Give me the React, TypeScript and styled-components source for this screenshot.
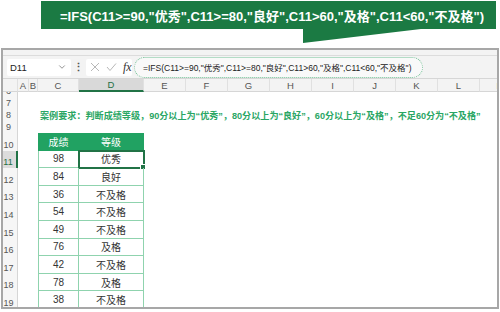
import styled, { createGlobalStyle, css } from 'styled-components';
import { ChevronDown } from 'lucide-react';

// Global

const Global = createGlobalStyle`
  html, body { margin: 0; padding: 0; background: #fff; }
  body { font-family: "Liberation Sans", "Noto Sans CJK SC", sans-serif; }
`;

const FORMULA = '=IFS(C11>=90,"优秀",C11>=80,"良好",C11>60,"及格",C11<60,"不及格")';
const COLS = '15px 11px 9px 41px 65px repeat(9, 42px)';

// Style

const Page = styled.div`
  width: 500px;
  height: 312px;
  display: flex;
  flex-direction: column;
  overflow: hidden;
  background: #fff;
`;

const BannerArea = styled.div`
  height: 48px;
  padding: 1px 4px 0 41px;
  box-sizing: border-box;
  flex: none;
`;

const Callout = styled.div`
  position: relative;
  height: 28px;
  background: #1b7a43;
  color: #fff;
  font-weight: bold;
  font-size: 13px;
  display: flex;
  align-items: center;
  padding-left: 19px;
  white-space: nowrap;

  &::after {
    content: '';
    position: absolute;
    left: 262px;
    top: 28px;
    width: 118px;
    height: 14px;
    background: #1b7a43;
    clip-path: polygon(0 0, 100% 0, 0 100%);
  }
`;

const Window = styled.div`
  margin: 0 1px;
  height: 261px;
  border: 2px solid #a7a7a7;
  box-sizing: border-box;
  display: flex;
  flex-direction: column;
  overflow: hidden;
  background: #fff;
`;

const Strip = styled.div`
  height: 5px;
  flex: none;
  background: #f3f3f3;
  border-bottom: 1px solid #dcdcdc;
`;

const FormulaBar = styled.div`
  height: 22px;
  flex: none;
  display: flex;
  align-items: center;
  padding-left: 4px;
  background: #f3f3f3;
`;

const NameBox = styled.div`
  width: 64px;
  height: 17px;
  box-sizing: border-box;
  background: #fff;
  border-radius: 2px;
  display: flex;
  align-items: center;
  justify-content: space-between;
  padding: 0 4px 0 3px;
  font-size: 9.5px;
  color: #222;
`;

const Dots = styled.div`
  width: 15px;
  text-align: center;
  font-size: 11px;
  font-weight: bold;
  color: #555;
`;

const FxBox = styled.div`
  width: 46px;
  height: 17px;
  box-sizing: border-box;
  background: #fff;
  border-radius: 2px;
  display: flex;
  align-items: center;
  gap: 6px;
  padding-left: 4px;
`;

const Fx = styled.span`
  font-family: "Liberation Serif", serif;
  font-style: italic;
  font-size: 12px;
  color: #333;
`;

const Pill = styled.div`
  margin-left: 2px;
  width: 289px;
  height: 21px;
  box-sizing: border-box;
  border: 1.5px dotted #6fbf93;
  border-radius: 11px;
  background: #f9f9f9;
  display: flex;
  align-items: center;
  padding-left: 8px;
  font-size: 8.5px;
  color: #222;
  white-space: nowrap;
`;

const HeaderRow = styled.div`
  height: 14px;
  flex: none;
  display: grid;
  grid-template-columns: ${COLS};
  background: #f3f3f3;
  border-top: 1px solid #d6d6d6;
  box-sizing: border-box;
  overflow: hidden;
`;

const ColHead = styled.div<{ $active?: boolean }>`
  font-size: 9.5px;
  color: #555;
  display: flex;
  align-items: center;
  justify-content: center;
  border-right: 1px solid #e0e0e0;
  border-bottom: 1px solid #d6d6d6;
  ${(p) =>
    p.$active &&
    css`
      background: #d9d9d9;
      color: #1e6f42;
      border-bottom: 2px solid #217346;
    `}
`;

const Body = styled.div`
  flex: 1;
  overflow: hidden;
`;

const Grid = styled.div`
  margin-top: -7px;
  display: grid;
  grid-template-columns: ${COLS};
  grid-template-rows: repeat(4, 12px) repeat(10, 17.6px);
`;

const RowHead = styled.div<{ $active?: boolean }>`
  grid-column: 1;
  background: #f6f6f6;
  border-right: 1px solid #d6d6d6;
  font-size: 9px;
  color: #555;
  display: flex;
  align-items: flex-end;
  justify-content: center;
  padding: 0 3px 1px 0;
  ${(p) =>
    p.$active &&
    css`
      background: #dcdcdc;
      border-right: 2px solid #217346;
      color: #1e6f42;
    `}
`;

const Note = styled.div<{ $row: number }>`
  grid-column: 4 / -1;
  grid-row: ${(p) => p.$row};
  padding-left: 2px;
  white-space: nowrap;
  font-size: 9.1px;
  font-weight: bold;
  color: #2aa664;
  display: flex;
  align-items: center;
`;

const Cell = styled.div<{ $row: number; $col: number; $head?: boolean; $selected?: boolean }>`
  position: relative;
  grid-row: ${(p) => p.$row};
  grid-column: ${(p) => p.$col};
  display: flex;
  align-items: center;
  justify-content: center;
  font-size: 10px;
  color: #333;
  border-right: 1px solid #8fd3ae;
  border-bottom: 1px solid #8fd3ae;
  ${(p) => p.$col === 4 && css`border-left: 1px solid #8fd3ae;`}
  ${(p) =>
    p.$head &&
    css`
      background: #21a262;
      color: #fff;
      border-color: #21a262;
    `}
  ${(p) =>
    p.$selected &&
    css`
      outline: 2px solid #217346;
      outline-offset: -1px;
      &::after {
        content: '';
        position: absolute;
        right: -3px;
        bottom: -3px;
        width: 4px;
        height: 4px;
        background: #217346;
        border: 1px solid #fff;
      }
    `}
`;

// Icons

const Cross = () => (
  <svg width="10" height="10" viewBox="0 0 10 10">
    <path d="M1 1 L9 9 M9 1 L1 9" stroke="#b8b8b8" strokeWidth="1" fill="none" />
  </svg>
);

const Check = () => (
  <svg width="11" height="10" viewBox="0 0 11 10">
    <path d="M1 5 L4 8.5 L10 1.5" stroke="#b8b8b8" strokeWidth="1" fill="none" />
  </svg>
);

// Data

const letters = ['A', 'B', 'C', 'D', 'E', 'F', 'G', 'H', 'I', 'J', 'K', 'L', 'M'];

const scores: [string, string][] = [
  ['98', '优秀'],
  ['84', '良好'],
  ['36', '不及格'],
  ['54', '不及格'],
  ['49', '不及格'],
  ['76', '及格'],
  ['42', '不及格'],
  ['78', '及格'],
  ['38', '不及格'],
];

// Component

const App = () => {
  const rows = [6, 7, 8, 9, 10, 11, 12, 13, 14, 15, 16, 17, 18, 19];

  return (
    <Page>
      <Global />
      <BannerArea>
        <Callout>{FORMULA}</Callout>
      </BannerArea>
      <Window>
        <Strip />
        <FormulaBar>
          <NameBox>
            D11
            <ChevronDown size={10} color="#555" strokeWidth={1.5} />
          </NameBox>
          <Dots>⋮</Dots>
          <FxBox>
            <Cross />
            <Check />
            <Fx>fx</Fx>
          </FxBox>
          <Pill>{FORMULA}</Pill>
        </FormulaBar>
        <HeaderRow>
          <ColHead />
          {letters.map((l) => (
            <ColHead key={l} $active={l === 'D'}>
              {l}
            </ColHead>
          ))}
        </HeaderRow>
        <Body>
          <Grid>
            {rows.map((r, i) => (
              <RowHead key={r} $active={r === 11} style={{ gridRow: i + 1 }}>
                {r}
              </RowHead>
            ))}
            <Note $row={3}>案例要求：判断成绩等级，90分以上为“优秀”，80分以上为“良好”，60分以上为“及格”，不足60分为“不及格”</Note>
            <Cell $row={5} $col={4} $head>成绩</Cell>
            <Cell $row={5} $col={5} $head>等级</Cell>
            {scores.map(([s, g], i) => [
              <Cell key={`c${i}`} $row={6 + i} $col={4}>{s}</Cell>,
              <Cell key={`d${i}`} $row={6 + i} $col={5} $selected={i === 0}>{g}</Cell>,
            ])}
          </Grid>
        </Body>
      </Window>
    </Page>
  );
};

export default App;
